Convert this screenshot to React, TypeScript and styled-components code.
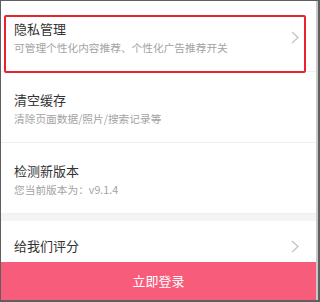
import React from "react";
import styled, { createGlobalStyle } from "styled-components";

const Global = createGlobalStyle`
  html, body { margin: 0; padding: 0; background: #5f5f5f; }
  body { font-family: "Noto Sans CJK SC", "Noto Sans", sans-serif; }
`;

const Frame = styled.div`
  position: relative;
  margin: 1px 0 0 1px;
  width: 315px;
  height: 299px;
  background: #ffffff;
  border-right: 2px solid #c9c9c9;
  display: flex;
  flex-direction: column;
  overflow: hidden;
`;

const List = styled.div`
  flex: 1;
  overflow: hidden;
  display: flex;
  flex-direction: column;
`;

const Row = styled.div<{ $compact?: boolean }>`
  flex-shrink: 0;
  display: flex;
  align-items: ${(p) => (p.$compact ? "flex-start" : "center")};
  padding: ${(p) => (p.$compact ? "16px 16px 0 13px" : "19px 16px 15px 13px")};
  height: ${(p) => (p.$compact ? "38px" : "71px")};
  box-sizing: border-box;
  border-bottom: ${(p) => (p.$compact ? "none" : "1px solid #f0f0f0")};
`;

const Texts = styled.div`
  flex: 1;
  display: flex;
  flex-direction: column;
  gap: 2px;
  align-self: flex-start;
`;

const Title = styled.div`
  font-size: 13px;
  line-height: 18px;
  color: #333333;
`;

const Sub = styled.div`
  font-size: 10.7px;
  line-height: 16px;
  color: #a3a3a3;
`;

const Band = styled.div`
  flex-shrink: 0;
  height: 7px;
  background: #f4f4f4;
`;

const Chevron = styled.svg`
  flex-shrink: 0;
  width: 8px;
  height: 13px;
  margin-right: 1px;
  align-self: center;
  margin-bottom: 2px;
`;

const ChevronTop = styled(Chevron)`
  align-self: flex-start;
  margin-top: 3px;
  margin-bottom: 0;
`;

const LoginButton = styled.button`
  flex-shrink: 0;
  height: 38px;
  width: 100%;
  border: none;
  margin: 0;
  padding: 0;
  background: #f75c7a;
  color: #ffffff;
  font-family: "Noto Sans CJK SC", sans-serif;
  font-size: 13px;
  line-height: 38px;
  text-align: center;
`;

const Highlight = styled.div`
  position: absolute;
  left: 3px;
  top: 14px;
  width: 302px;
  height: 58px;
  box-sizing: border-box;
  border: 2px solid #e8252c;
  border-radius: 2px;
  pointer-events: none;
`;

const Arrow = ({ top }: { top?: boolean }) => {
  const C = top ? ChevronTop : Chevron;
  return (
    <C viewBox="0 0 8 13">
      <polyline points="1,1 7,6.5 1,12" fill="none" stroke="#c3c3c3" strokeWidth="1.3" />
    </C>
  );
};

export default function App() {
  return (
    <>
      <Global />
      <Frame>
        <List>
          <Row>
            <Texts>
              <Title>隐私管理</Title>
              <Sub>可管理个性化内容推荐、个性化广告推荐开关</Sub>
            </Texts>
            <Arrow />
          </Row>
          <Row>
            <Texts>
              <Title>清空缓存</Title>
              <Sub>清除页面数据/照片/搜索记录等</Sub>
            </Texts>
          </Row>
          <Row>
            <Texts>
              <Title>检测新版本</Title>
              <Sub>您当前版本为：v9.1.4</Sub>
            </Texts>
          </Row>
          <Band />
          <Row $compact>
            <Texts>
              <Title>给我们评分</Title>
            </Texts>
            <Arrow top />
          </Row>
        </List>
        <LoginButton>立即登录</LoginButton>
        <Highlight />
      </Frame>
    </>
  );
}
